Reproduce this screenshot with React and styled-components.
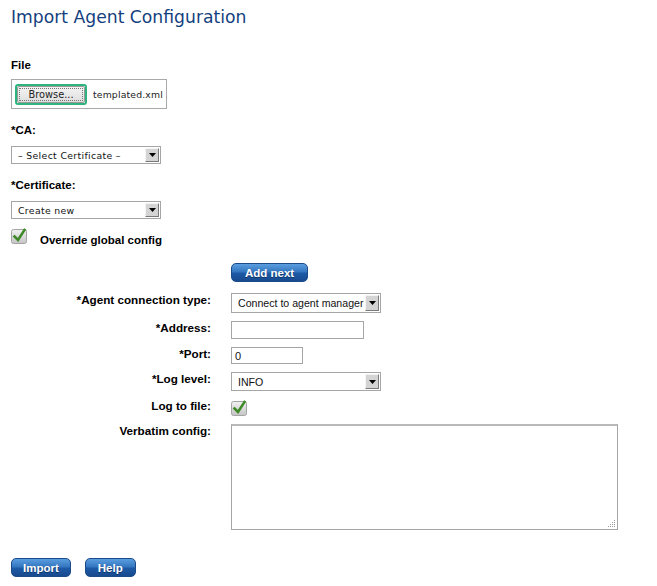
import React from "react";
import styled, { createGlobalStyle } from "styled-components";

const GlobalStyle = createGlobalStyle`
  body {
    margin: 0;
    background: #fff;
    font-family: "Liberation Sans", Arial, sans-serif;
    color: #000;
  }
`;

const Page = styled.div`
  padding: 7px 11px 0 11px;
`;

const Title = styled.h1`
  margin: 0;
  font-family: "DejaVu Sans", sans-serif;
  font-weight: normal;
  font-size: 17.2px;
  line-height: 20px;
  color: #143f7e;
`;

const FieldLabel = styled.div`
  font-weight: bold;
  font-size: 11.5px;
  line-height: 14px;
  margin-top: ${(p) => p.$top}px;
`;

const FileBox = styled.div`
  margin-top: 7px;
  width: 151px;
  height: 28px;
  border: 1px solid #a9a9a9;
  display: flex;
  align-items: center;
  padding-left: 3px;
  box-sizing: content-box;
  gap: 6px;
`;

const FocusRing = styled.div`
  border: 2px solid #2fb47f;
  border-radius: 3px;
  display: flex;
`;

const BrowseButton = styled.button`
  width: 68px;
  height: 17px;
  margin: 0;
  padding: 0;
  border: 1px solid #9a9a9a;
  border-radius: 2px;
  background: linear-gradient(#f4f4f4, #dedede);
  font-family: "DejaVu Sans", sans-serif;
  font-size: 9.8px;
  color: #222;
  outline: 1px dotted #777;
  outline-offset: -3px;
`;

const FileName = styled.span`
  font-family: "DejaVu Sans", sans-serif;
  font-size: 9.3px;
  letter-spacing: 0.15px;
  color: #222;
`;

const SelectBox = styled.div`
  margin-top: ${(p) => p.$top || 0}px;
  width: ${(p) => p.$width}px;
  height: ${(p) => p.$height}px;
  border: 1px solid #a5a5a5;
  box-sizing: border-box;
  display: flex;
  align-items: center;
  background: #fff;
`;

const SelectValue = styled.span`
  flex: 1;
  min-width: 0;
  padding-left: 6px;
  font-family: ${(p) =>
    p.$small ? '"DejaVu Sans", sans-serif' : '"Liberation Sans", Arial, sans-serif'};
  font-size: ${(p) => (p.$small ? 9.3 : 10.6)}px;
  letter-spacing: ${(p) => (p.$small ? 0.35 : 0)}px;
  white-space: nowrap;
  overflow: hidden;
  color: #111;
`;

const ArrowBox = styled.span`
  align-self: stretch;
  flex: none;
  width: 12px;
  margin: 1px;
  background: #d4d4d4;
  border-left: 1px solid #f4f4f4;
  border-top: 1px solid #f4f4f4;
  border-right: 1px solid #7a7a7a;
  border-bottom: 1px solid #7a7a7a;
  display: flex;
  align-items: center;
  justify-content: center;
`;

const CheckRow = styled.div`
  margin-top: 8px;
  display: flex;
  align-items: flex-start;
  gap: 12px;
`;

const CheckLabel = styled.span`
  font-weight: bold;
  font-size: 11.5px;
  line-height: 14px;
  margin-top: 6px;
`;

const FormGrid = styled.div`
  margin-top: 16px;
  display: grid;
  grid-template-columns: 200px auto;
  column-gap: 20px;
  row-gap: 8px;
  align-items: start;
`;

const RowLabel = styled.div`
  text-align: right;
  font-weight: bold;
  font-size: 11.7px;
  line-height: 14px;
`;

const BlueButton = styled.button`
  height: 19px;
  margin: 0;
  padding: 0 ${(p) => p.$pad || 11}px;
  border: 1px solid #1b4a88;
  border-radius: 5px;
  background: linear-gradient(#5a9ee0 0%, #3577c0 45%, #1d5aa6 55%, #174a8e 100%);
  color: #fff;
  font-family: "Liberation Sans", Arial, sans-serif;
  font-weight: bold;
  font-size: 11.5px;
  text-shadow: 0 1px 0 #0e3566;
  justify-self: start;
  margin-bottom: ${(p) => p.$below || 0}px;
`;

const TextInput = styled.input`
  width: ${(p) => p.$width}px;
  height: ${(p) => p.$height}px;
  box-sizing: border-box;
  margin: 0;
  border: 1px solid #a5a5a5;
  padding: 0 3px;
  font-family: "Liberation Sans", Arial, sans-serif;
  font-size: 11px;
  color: #111;
  outline: none;
`;

const AreaWrap = styled.div`
  position: relative;
  width: 387px;
  height: 106px;
`;

const ConfigArea = styled.textarea`
  width: 100%;
  height: 100%;
  box-sizing: border-box;
  margin: 0;
  border: 1px solid #a5a5a5;
  border-top: 2px solid #b9b9b9;
  resize: none;
  display: block;
  outline: none;
`;

const Grip = styled.svg`
  position: absolute;
  right: 2px;
  bottom: 2px;
`;

const Footer = styled.div`
  margin-top: 28px;
  display: flex;
  gap: 14px;
`;

const Arrow = () => (
  <svg width="7" height="4" viewBox="0 0 7 4">
    <path d="M0 0h7L3.5 4z" fill="#000" />
  </svg>
);

const Select = ({ value, width, height, top, small }) => (
  <SelectBox $width={width} $height={height} $top={top}>
    <SelectValue $small={small}>{value}</SelectValue>
    <ArrowBox>
      <Arrow />
    </ArrowBox>
  </SelectBox>
);

const Checkbox = () => (
  <svg width="17" height="17" viewBox="0 0 17 17">
    <defs>
      <linearGradient id="cbg" x1="0" y1="0" x2="0" y2="1">
        <stop offset="0" stopColor="#f2f2f2" />
        <stop offset="1" stopColor="#c4c4c4" />
      </linearGradient>
    </defs>
    <rect x="0.5" y="2.5" width="15" height="14" rx="2" fill="url(#cbg)" stroke="#a4a4a4" />
    <path d="M3.5 9.5 L7 13 L13.5 3" fill="none" stroke="#3f8a28" strokeWidth="2.6" strokeLinecap="square" />
  </svg>
);

const GripDots = () => (
  <Grip width="9" height="9" viewBox="0 0 9 9">
    {[
      [7, 1], [7, 3], [5, 3], [7, 5], [5, 5], [3, 5], [7, 7], [5, 7], [3, 7], [1, 7],
    ].map(([x, y]) => (
      <rect key={`${x}-${y}`} x={x} y={y} width="1" height="1" fill="#9a9a9a" />
    ))}
  </Grip>
);

const App = () => {
  return (
    <Page>
      <GlobalStyle />
      <Title>Import Agent Configuration</Title>

      <FieldLabel $top={31}>File</FieldLabel>
      <FileBox>
        <FocusRing>
          <BrowseButton>Browse...</BrowseButton>
        </FocusRing>
        <FileName>templated.xml</FileName>
      </FileBox>

      <FieldLabel $top={14}>*CA:</FieldLabel>
      <Select value="– Select Certificate –" width={150} height={18} top={9} small />

      <FieldLabel $top={14}>*Certificate:</FieldLabel>
      <Select value="Create new" width={150} height={18} top={9} small />

      <CheckRow>
        <Checkbox />
        <CheckLabel>Override global config</CheckLabel>
      </CheckRow>

      <FormGrid>
        <span />
        <BlueButton $below={3} $pad={13}>Add next</BlueButton>

        <RowLabel>*Agent connection type:</RowLabel>
        <Select value="Connect to agent manager" width={150} height={20} />

        <RowLabel>*Address:</RowLabel>
        <TextInput type="text" $width={133} $height={18} />

        <RowLabel>*Port:</RowLabel>
        <TextInput type="text" defaultValue="0" $width={72} $height={17} />

        <RowLabel>*Log level:</RowLabel>
        <Select value="INFO" width={150} height={19} />

        <RowLabel>Log to file:</RowLabel>
        <Checkbox />

        <RowLabel>Verbatim config:</RowLabel>
        <AreaWrap>
          <ConfigArea />
          <GripDots />
        </AreaWrap>
      </FormGrid>

      <Footer>
        <BlueButton>Import</BlueButton>
        <BlueButton $pad={12}>Help</BlueButton>
      </Footer>
    </Page>
  );
};

export default App;
